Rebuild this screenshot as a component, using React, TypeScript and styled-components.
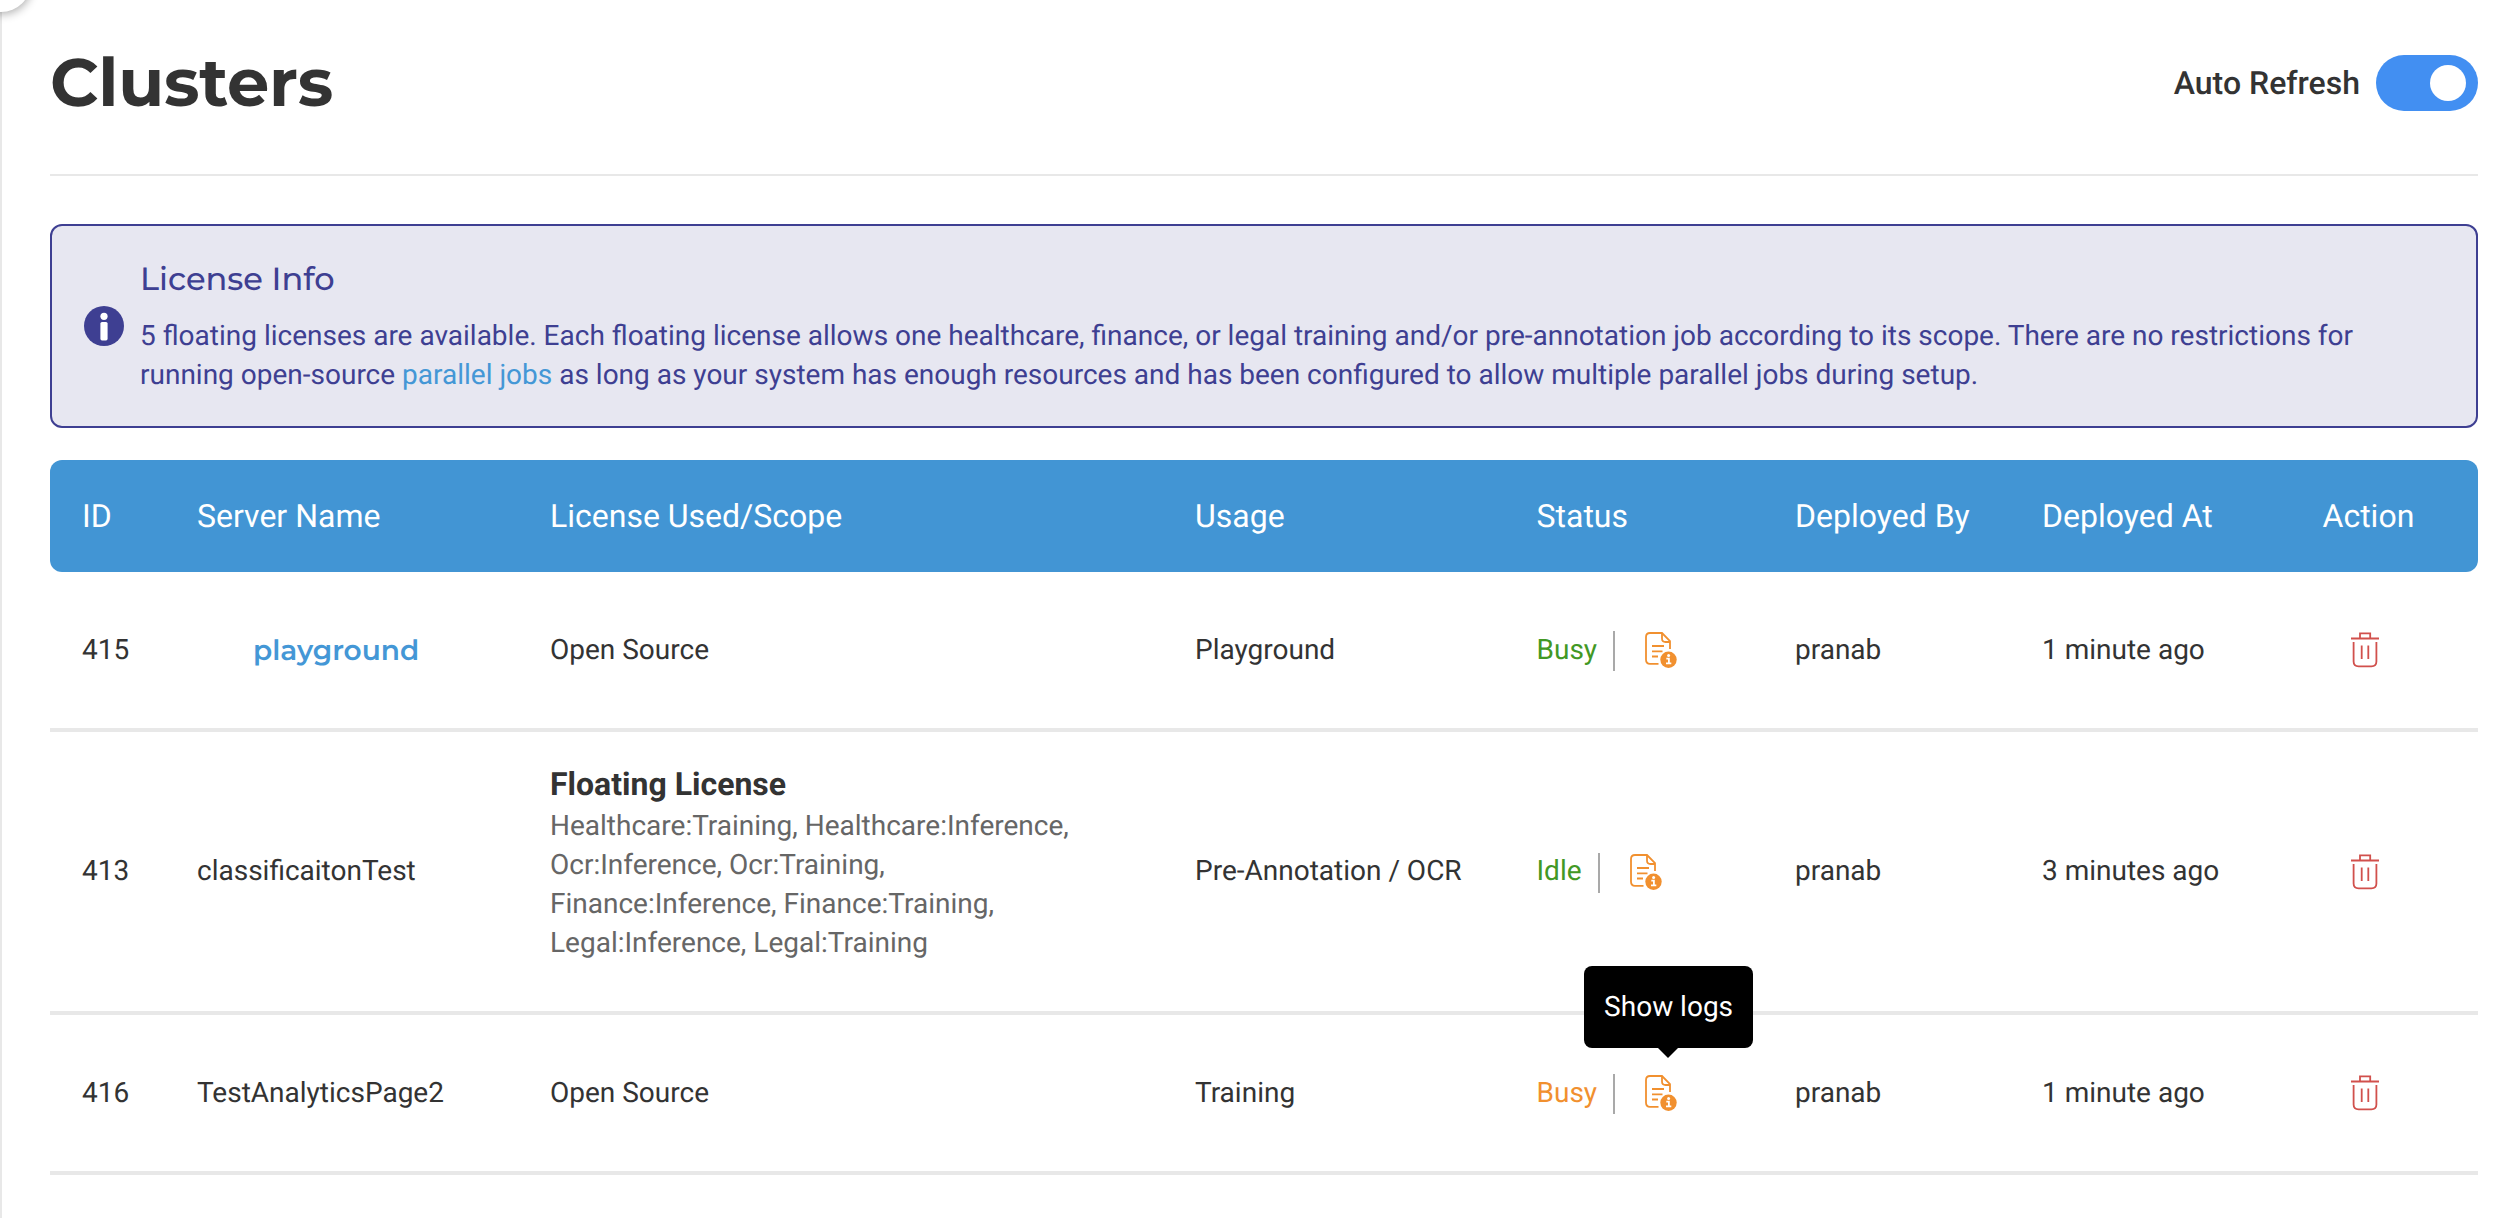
import React from "react";
import styled, { createGlobalStyle } from "styled-components";

const Global = createGlobalStyle`
  * { box-sizing: border-box; }
  body { margin: 0; background: #fff; font-family: Roboto, "Liberation Sans", sans-serif; color: #333; text-rendering: geometricPrecision; }
`;

const Page = styled.main`
  position: relative;
  width: 2508px;
  height: 1218px;
  background: #fff;
  border-left: 2px solid #e8e8e8;
  padding: 0 30px 0 48px;
  font-size: 28px;
`;

const SidebarHandle = styled.div`
  position: absolute;
  left: -31px;
  top: -48px;
  width: 60px;
  height: 60px;
  border-radius: 50%;
  background: #fff;
  box-shadow: 1px 2px 10px rgba(0, 0, 0, 0.32);
`;

const Header = styled.header`
  display: flex;
  align-items: center;
  justify-content: space-between;
  height: 176px;
  padding-bottom: 8px;
  border-bottom: 2px solid #e8e8e8;
`;

const Title = styled.h1`
  margin: 0;
  padding-bottom: 2px;
  font: 700 67px/80px Montserrat, Inter, sans-serif;
  letter-spacing: -0.25px;
`;

const Refresh = styled.label`
  display: flex;
  align-items: center;
  gap: 16px;
  font-size: 32px;
  font-weight: 500;
`;

const Toggle = styled.span`
  display: flex;
  align-items: center;
  justify-content: flex-end;
  width: 102px;
  height: 56px;
  padding-right: 12px;
  border-radius: 28px;
  background: #428ff2;
`;

const Knob = styled.span`
  width: 36px;
  height: 36px;
  border-radius: 50%;
  background: #fff;
`;

const Notice = styled.section`
  display: flex;
  align-items: center;
  gap: 16px;
  height: 204px;
  margin-top: 48px;
  padding: 0 32px;
  border: 2px solid #3e3f92;
  border-radius: 12px;
  background: #e7e7f1;
  color: #3e3f92;
  svg { flex: none; }
`;

const NoticeTitle = styled.h2`
  margin: 1px 0 16px;
  font: 500 32px/40px Montserrat, Inter, sans-serif;
`;

const NoticeText = styled.p`
  margin: 0;
  line-height: 39px;
`;

const Link = styled.a`
  color: #4497d6;
`;

const columns = "115px 353px 645px 341.5px 258.5px 247px 280.5px 187.5px";

const HeadRow = styled.div`
  display: grid;
  grid-template-columns: ${columns};
  align-items: center;
  height: 112px;
  margin-top: 32px;
  border-radius: 12px;
  background: #4295d4;
  color: #fff;
  font-size: 32px;
`;

const Row = styled.div<{ $h: number }>`
  display: grid;
  grid-template-columns: ${columns};
  align-items: center;
  height: ${(p) => p.$h}px;
  border-bottom: 4px solid #e8e8e8;
`;

const Cell = styled.div<{ $lift?: number }>`
  padding: 0 0 ${(p) => p.$lift ?? 0}px 32px;
  white-space: nowrap;
`;

const ActionCell = styled.div`
  display: flex;
  padding-left: 60.5px;
`;

const ServerLink = styled.a`
  display: block;
  margin: 2px 0 0 56px;
  color: #4497d6;
  font: 600 28px/34px Montserrat, Inter, sans-serif;
`;

const ScopeTitle = styled.div`
  font-size: 32px;
  font-weight: 700;
  line-height: 44px;
`;

const ScopeText = styled.div`
  color: #666;
  line-height: 39px;
  white-space: pre-line;
`;

const Status = styled.div<{ $color: string }>`
  display: flex;
  align-items: center;
  color: ${(p) => p.$color};
`;

const StatusText = styled.span`
  padding-bottom: 2px;
`;

const Divider = styled.span`
  width: 2px;
  height: 40px;
  margin: 2px 30px 0 16px;
  background: #a9a9a9;
`;

const LogButton = styled.span`
  position: relative;
  display: flex;
`;

const Tooltip = styled.span`
  position: absolute;
  left: -61px;
  bottom: 63px;
  width: 169px;
  height: 82px;
  border-radius: 8px;
  background: #000;
  color: #fff;
  line-height: 81px;
  text-align: center;
  &::after {
    content: "";
    position: absolute;
    left: 74px;
    top: 82px;
    border: 10px solid transparent;
    border-top-color: #000;
    border-bottom: 0;
  }
`;

const InfoIcon = () => (
  <svg width="40" height="40" viewBox="0 0 40 40">
    <circle cx="20" cy="20" r="20" fill="#3e3f92" />
    <circle cx="20" cy="10.3" r="3.6" fill="#fff" />
    <rect x="16.4" y="16" width="7.2" height="18.4" rx="1.6" fill="#fff" />
  </svg>
);

const LogIcon = () => (
  <svg width="32" height="36" viewBox="0 0 32 36" fill="none" stroke="#f1902f" strokeWidth="1.8">
    <path d="M13.5 31.8H5Q1 31.8 1 27.8V5Q1 1 5 1H17L25 9V17" />
    <path d="M17 1V6.5Q17 10 20.5 10H25M7 14H19M7 19.3H17.5M7 24.5H13" />
    <circle cx="23.5" cy="27.7" r="8.2" fill="#f1902f" stroke="none" />
    <path d="M21.3 26.6H23.9V31.2M21 31.4H26.3" stroke="#fff" strokeWidth="1.8" />
    <circle cx="23.6" cy="23.6" r="1.5" fill="#fff" stroke="none" />
  </svg>
);

const TrashIcon = () => (
  <svg width="28" height="36" viewBox="0 0 28 36" fill="none" stroke="#d1504c" strokeWidth="1.8">
    <path d="M0 6.5H28M9 6V1.4H19.2V6M2.6 10V29.5Q2.6 34.3 7.6 34.3H20.4Q25.4 34.3 25.4 29.5V10M10.7 13.5V27M17.3 13.5V27" />
  </svg>
);

interface Cluster {
  id: number;
  name: string;
  link?: boolean;
  scopes?: string;
  usage: string;
  status: string;
  color: string;
  at: string;
  height: number;
  tip?: boolean;
}

const clusters: Cluster[] = [
  { id: 415, name: "playground", link: true, usage: "Playground", status: "Busy", color: "#429824", at: "1 minute ago", height: 160 },
  {
    id: 413,
    name: "classificaitonTest",
    scopes:
      "Healthcare:Training, Healthcare:Inference,\nOcr:Inference, Ocr:Training,\nFinance:Inference, Finance:Training,\nLegal:Inference, Legal:Training",
    usage: "Pre-Annotation / OCR",
    status: "Idle",
    color: "#429824",
    at: "3 minutes ago",
    height: 283,
  },
  { id: 416, name: "TestAnalyticsPage2", usage: "Training", status: "Busy", color: "#f1902f", at: "1 minute ago", height: 160, tip: true },
];

const heads = ["ID", "Server Name", "License Used/Scope", "Usage", "Status", "Deployed By", "Deployed At", "Action"];

export default function App() {
  return (
    <>
      <Global />
      <Page>
        <SidebarHandle />
        <Header>
          <Title>Clusters</Title>
          <Refresh>
            Auto Refresh
            <Toggle><Knob /></Toggle>
          </Refresh>
        </Header>
        <Notice>
          <InfoIcon />
          <div>
            <NoticeTitle>License Info</NoticeTitle>
            <NoticeText>
              5 floating licenses are available. Each floating license allows one healthcare, finance, or legal training
              and/or pre-annotation job according to its scope. There are no restrictions for
              <br />
              running open-source <Link>parallel jobs</Link> as long as your system has enough resources and has been
              configured to allow multiple parallel jobs during setup.
            </NoticeText>
          </div>
        </Notice>
        <HeadRow>
          {heads.map((h) => <Cell key={h}>{h}</Cell>)}
        </HeadRow>
        {clusters.map((c) => (
          <Row key={c.id} $h={c.height}>
            <Cell $lift={2}>{c.id}</Cell>
            <Cell $lift={c.link ? 0 : 2}>{c.link ? <ServerLink>{c.name}</ServerLink> : c.name}</Cell>
            <Cell $lift={c.scopes ? 20 : 2}>
              {c.scopes ? (
                <>
                  <ScopeTitle>Floating License</ScopeTitle>
                  <ScopeText>{c.scopes}</ScopeText>
                </>
              ) : "Open Source"}
            </Cell>
            <Cell $lift={2}>{c.usage}</Cell>
            <Cell>
              <Status $color={c.color}>
                <StatusText>{c.status}</StatusText>
                <Divider />
                <LogButton>
                  <LogIcon />
                  {c.tip && <Tooltip>Show logs</Tooltip>}
                </LogButton>
              </Status>
            </Cell>
            <Cell $lift={2}>pranab</Cell>
            <Cell $lift={2}>{c.at}</Cell>
            <ActionCell><TrashIcon /></ActionCell>
          </Row>
        ))}
      </Page>
    </>
  );
}
